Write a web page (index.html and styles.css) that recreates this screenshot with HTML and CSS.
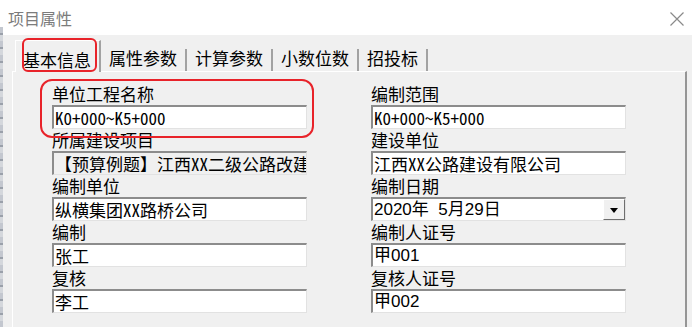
FILE: index.html
```html
<!DOCTYPE html>
<html lang="zh-CN">
<head>
    <meta charset="UTF-8">
    <title>项目属性</title>
    <link rel="stylesheet" href="styles.css">
</head>
<body>
    <div class="window">
        <div class="titlebar">
            <span class="title">项目属性</span>
            <svg class="close" width="16" height="16" viewBox="0 0 16 16">
                <path d="M1.5 1.5 L14.5 14.5 M14.5 1.5 L1.5 14.5" stroke="#8a8a8a" stroke-width="1.2" fill="none"/>
            </svg>
        </div>

        <div class="client">
            <div class="edge"></div>

            <div class="tabs">
                <div class="tab active">基本信息</div>
                <div class="tab">属性参数</div>
                <div class="tab">计算参数</div>
                <div class="tab">小数位数</div>
                <div class="tab">招投标</div>
            </div>

            <div class="panel">
                <div class="form">
                    <div class="field">
                        <div class="label">单位工程名称</div>
                        <div class="input mono">K0+000~K5+000</div>
                    </div>
                    <div class="field">
                        <div class="label">编制范围</div>
                        <div class="input mono">K0+000~K5+000</div>
                    </div>

                    <div class="field">
                        <div class="label">所属建设项目</div>
                        <div class="input mono readonly">【预算例题】江西XX二级公路改建工程</div>
                    </div>
                    <div class="field">
                        <div class="label">建设单位</div>
                        <div class="input mono">江西XX公路建设有限公司</div>
                    </div>

                    <div class="field">
                        <div class="label">编制单位</div>
                        <div class="input mono">纵横集团XX路桥公司</div>
                    </div>
                    <div class="field">
                        <div class="label">编制日期</div>
                        <div class="input combo">
                            <span class="combo-text">2020年&nbsp; 5月29日</span>
                            <span class="drop"><span class="arrow"></span></span>
                        </div>
                    </div>

                    <div class="field">
                        <div class="label">编制</div>
                        <div class="input mono">张工</div>
                    </div>
                    <div class="field">
                        <div class="label">编制人证号</div>
                        <div class="input sans">甲001</div>
                    </div>

                    <div class="field">
                        <div class="label">复核</div>
                        <div class="input mono">李工</div>
                    </div>
                    <div class="field">
                        <div class="label">复核人证号</div>
                        <div class="input sans">甲002</div>
                    </div>
                </div>
            </div>

            <!-- red annotation frames -->
            <div class="mark mark-tab"></div>
            <div class="mark mark-field"></div>
        </div>
    </div>
</body>
</html>
```

FILE: styles.css
```css
:root {
    --face: #f0f0f0;
    --shadow: #8c8c8c;
    --light: #e2e2e2;
    --mark: #e8232a;
}

body {
    margin: 0;
    background: var(--face);
    font-family: "Noto Sans CJK SC", "Noto Sans", sans-serif;
    color: #000;
}

.window {
    width: 692px;
    height: 327px;
    overflow: hidden;
}

.titlebar {
    height: 35px;
    background: #fff;
    display: flex;
    align-items: center;
    justify-content: space-between;
    padding: 0 7px 0 8px;
    box-sizing: border-box;
}

.title {
    font-size: 16px;
    color: #7c7c7c;
    line-height: 35px;
    padding-top: 2px;
}

.close {
    margin-top: 3px;
}

.client {
    position: relative;
    height: 292px;
    padding-top: 5px;
    box-sizing: border-box;
}

.edge {
    position: absolute;
    left: 0;
    top: -8px;
    bottom: 0;
    width: 3px;
    background: repeating-linear-gradient(#c3c7cf 0 6px, #9aa0aa 6px 8px, #d4d7dc 8px 14px);
}

.tabs {
    display: flex;
    align-items: flex-end;
    height: 31px;
    margin-left: 15px;
    font-size: 17px;
}

.tab {
    line-height: 18px;
    padding: 0 8px 4px 8px;
    height: 22px;
    box-sizing: border-box;
    border-right: 2px solid #a2a2a2;
    white-space: nowrap;
}

.tab.active {
    height: 32px;
    margin-bottom: -1px;
    padding-top: 10px;
    padding-bottom: 5px;
    border-left: 1px solid #fff;
    border-top: 1px solid #fff;
    padding-left: 7px;
    background: var(--face);
    position: relative;
    z-index: 1;
}

.panel {
    margin-left: 12px;
    width: 675px;
    height: 270px;
    box-sizing: border-box;
    border-top: 1px solid #fff;
    border-left: 1px solid #fff;
    border-right: 2px solid #959595;
    padding: 11px 0 0 39px;
}

.form {
    display: grid;
    grid-template-columns: 255px 255px;
    column-gap: 64px;
}

.field {
    display: flex;
    flex-direction: column;
}

.label {
    height: 22px;
    line-height: 22px;
    font-size: 17px;
    white-space: nowrap;
}

.input {
    height: 24px;
    box-sizing: border-box;
    background: #fff;
    border-top: 2px solid var(--shadow);
    border-left: 2px solid var(--shadow);
    border-right: 1px solid var(--light);
    border-bottom: 1px solid var(--light);
    padding-left: 1px;
    line-height: 21px;
    font-size: 17px;
    white-space: nowrap;
    overflow: hidden;
}

.mono {
    font-family: "Noto Sans Mono CJK SC", "Liberation Mono", "Noto Sans CJK SC", monospace;
}

.sans {
    font-family: "Liberation Sans", "Noto Sans CJK SC", sans-serif;
}

.readonly {
    background: var(--face);
}

.combo {
    display: flex;
    font-family: "Liberation Sans", "Noto Sans CJK SC", sans-serif;
}

.combo-text {
    flex: 1;
}

.drop {
    width: 22px;
    height: 21px;
    box-sizing: border-box;
    background: var(--face);
    border: 1px solid;
    border-color: #fff #6e6e6e #6e6e6e #fff;
    display: flex;
    align-items: center;
    justify-content: center;
}

.arrow {
    width: 0;
    height: 0;
    border-left: 4px solid transparent;
    border-right: 4px solid transparent;
    border-top: 5px solid #000;
    margin-top: 1px;
}

.mark {
    position: absolute;
    z-index: 2;
    border: 2px solid var(--mark);
    box-sizing: border-box;
}

.mark-tab {
    left: 22px;
    top: 3px;
    width: 75px;
    height: 34px;
    border-radius: 6px;
}

.mark-field {
    left: 40px;
    top: 44px;
    width: 274px;
    height: 59px;
    border-radius: 12px;
}
```
